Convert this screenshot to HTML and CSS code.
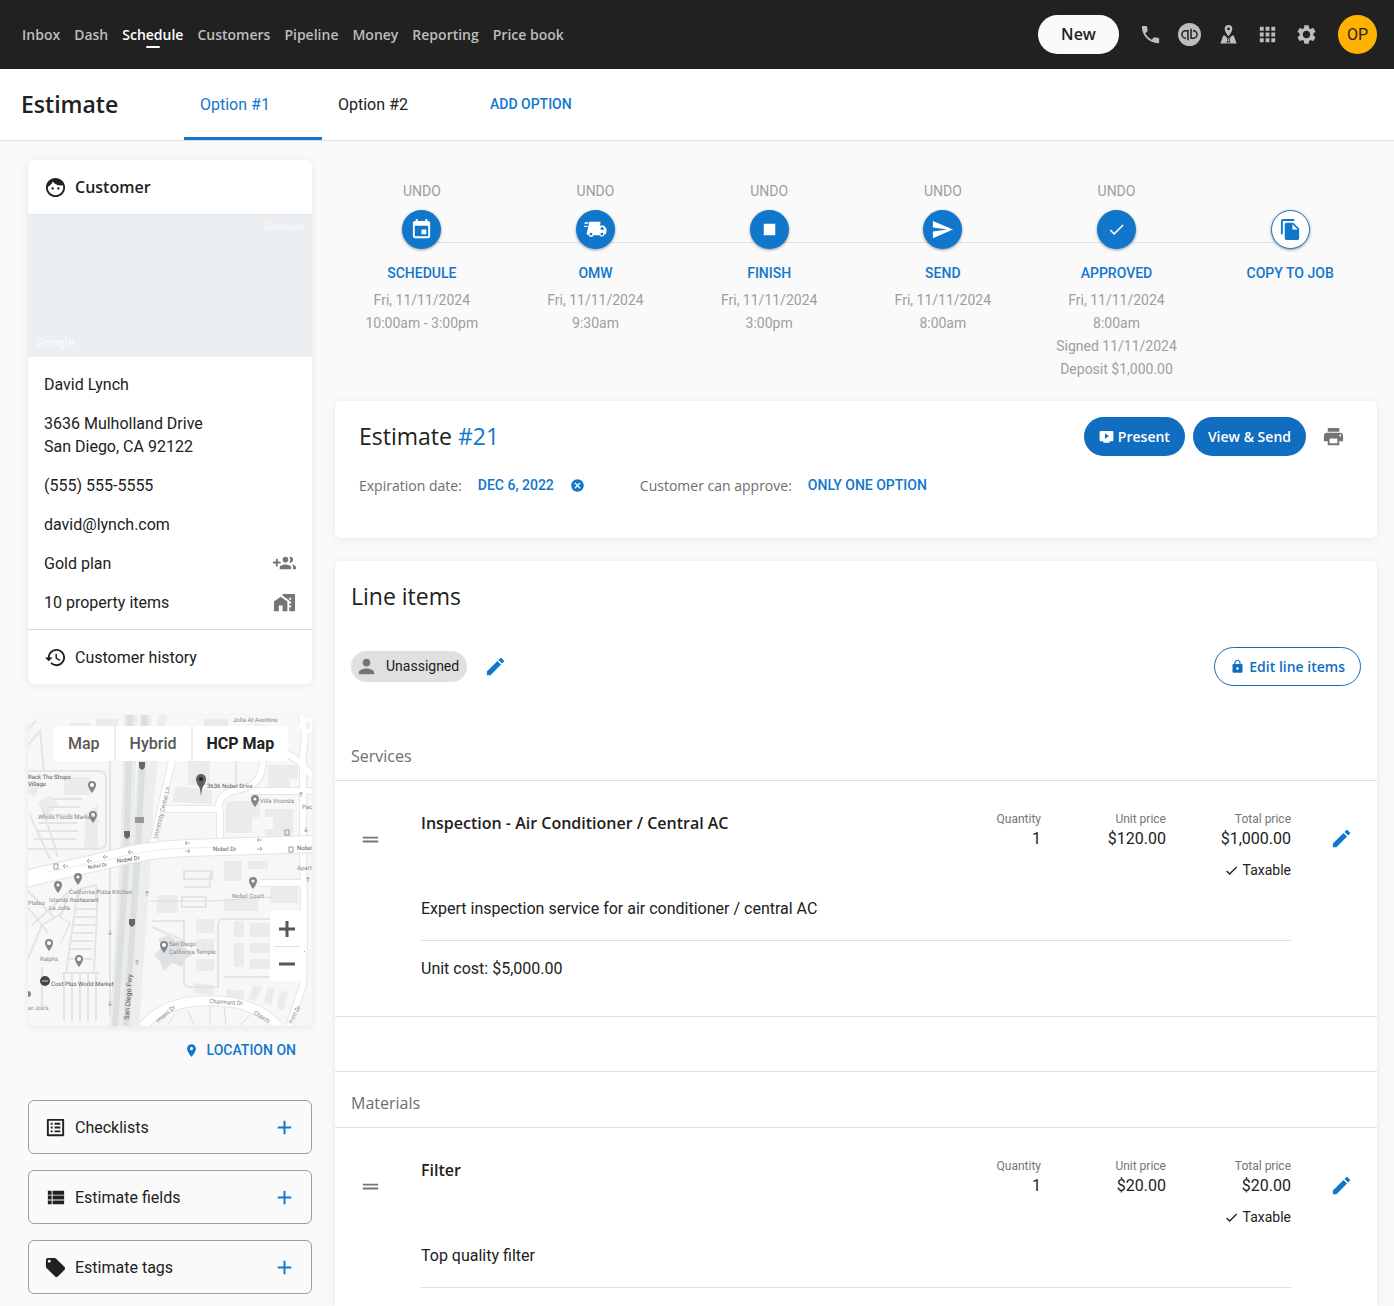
FILE: index.html
```html
<!DOCTYPE html>
<html lang="en">
<head>
    <meta charset="UTF-8">
    <meta name="viewport" content="width=device-width, initial-scale=1.0">
    <title>Estimate #21</title>
    <link rel="stylesheet" href="styles.css">
</head>
<body>
    <svg class="sprite" aria-hidden="true">
        <symbol id="i-phone" viewBox="0 0 24 24"><path d="M6.62 10.79c1.44 2.83 3.76 5.14 6.59 6.59l2.2-2.2c.27-.27.67-.36 1.02-.24 1.12.37 2.33.57 3.57.57.55 0 1 .45 1 1V20c0 .55-.45 1-1 1-9.39 0-17-7.61-17-17 0-.55.45-1 1-1h3.5c.55 0 1 .45 1 1 0 1.25.2 2.45.57 3.57.11.35.03.74-.25 1.02l-2.2 2.2z"/></symbol>
        <symbol id="i-qb" viewBox="0 0 24 24"><circle cx="12" cy="12" r="12"/><g fill="none" stroke="#212121" stroke-width="1.6"><path d="M10.400 18V8H8a3.900 3.900 0 0 0 0 7.800h.4"/><path d="M13.600 6v9.800H16A3.900 3.900 0 0 0 16 8h-.4"/></g></symbol>
        <symbol id="i-tracker" viewBox="0 0 24 24"><path fill-rule="evenodd" d="M12 2a4 4 0 0 0-4 4c0 3 4 8 4 8s4-5 4-8a4 4 0 0 0-4-4zm0 2.600a1.500 1.500 0 1 1 0 3 1.500 1.500 0 0 1 0-3z"/><path d="M8.300 13H6.500L3.500 21.500h6.600L11 16zM15.700 13h1.800l3 8.500h-6.600L13 16zM12 16l-1 3h2zM10.900 20l-.3 1.500h2.800l-.3-1.500z"/></symbol>
        <symbol id="i-apps" viewBox="0 0 24 24"><path d="M4 8h4V4H4v4zm6 12h4v-4h-4v4zm-6 0h4v-4H4v4zm0-6h4v-4H4v4zm6 0h4v-4h-4v4zm6-10v4h4V4h-4zm-6 4h4V4h-4v4zm6 6h4v-4h-4v4zm0 6h4v-4h-4v4z"/></symbol>
        <symbol id="i-settings" viewBox="0 0 24 24"><path d="M19.140 12.940c.04-.3.06-.61.06-.94 0-.32-.02-.64-.07-.94l2.030-1.580c.18-.14.23-.41.12-.61l-1.920-3.320c-.12-.22-.37-.29-.59-.22l-2.390.96c-.5-.38-1.030-.7-1.620-.94l-.36-2.540c-.04-.24-.24-.41-.48-.41h-3.840c-.24 0-.43.17-.47.41l-.36 2.540c-.59.24-1.130.57-1.620.94l-2.390-.96c-.22-.08-.47 0-.59.22L2.740 8.870c-.12.21-.08.47.12.61l2.030 1.580c-.05.3-.09.63-.09.94s.02.64.07.94l-2.030 1.580c-.18.14-.23.41-.12.61l1.920 3.320c.12.22.37.29.59.22l2.390-.96c.5.38 1.030.7 1.620.94l.36 2.540c.05.24.24.41.48.41h3.840c.24 0 .44-.17.47-.41l.36-2.540c.59-.24 1.130-.56 1.620-.94l2.390.96c.22.08.47 0 .59-.22l1.920-3.320c.12-.22.07-.47-.12-.61l-2.010-1.580zM12 15.900c-2.150 0-3.900-1.750-3.900-3.900s1.750-3.900 3.900-3.900 3.900 1.750 3.900 3.900-1.750 3.900-3.900 3.900z"/></symbol>
        <symbol id="i-face" viewBox="0 0 24 24"><path d="M9 11.750c-.69 0-1.250.56-1.250 1.250s.56 1.250 1.250 1.250 1.250-.56 1.250-1.250-.56-1.250-1.250-1.250zm6 0c-.69 0-1.250.56-1.250 1.250s.56 1.250 1.250 1.250 1.250-.56 1.250-1.250-.56-1.250-1.250-1.250zM12 2C6.480 2 2 6.480 2 12s4.480 10 10 10 10-4.480 10-10S17.520 2 12 2zm0 18c-4.410 0-8-3.590-8-8 0-.29.02-.58.05-.86 2.360-1.050 4.230-2.980 5.210-5.370C11.070 8.330 14.050 10 17.420 10c.78 0 1.530-.09 2.250-.26.21.71.33 1.470.33 2.260 0 4.410-3.590 8-8 8z"/></symbol>
        <symbol id="i-group-add" viewBox="0 0 24 24"><path d="M8 10H5V7H3v3H0v2h3v3h2v-3h3v-2zm10 1c1.660 0 2.990-1.340 2.990-3S19.660 5 18 5c-.32 0-.63.05-.91.14.57.81.9 1.790.9 2.860s-.34 2.040-.9 2.860c.28.09.59.14.91.14zm-5 0c1.660 0 2.990-1.340 2.990-3S14.660 5 13 5c-1.660 0-3 1.340-3 3s1.340 3 3 3zm6.620 2.160c.83.73 1.380 1.660 1.380 2.840v2h3v-2c0-1.540-2.370-2.490-4.380-2.840zM13 13c-2 0-6 1-6 3v2h12v-2c0-2-4-3-6-3z"/></symbol>
        <symbol id="i-home-work" viewBox="0 0 24 24"><path d="M1 11v10h5v-6h4v6h5V11L8 6z"/><path d="M10 3v2l7 5v11h6V3H10zm9 14h-2v-2h2v2zm0-4h-2v-2h2v2zm0-4h-2V7h2v2z"/></symbol>
        <symbol id="i-history" viewBox="0 0 24 24"><path d="M13 3c-4.970 0-9 4.030-9 9H1l3.890 3.890.07.14L9 12H6c0-3.870 3.130-7 7-7s7 3.130 7 7-3.130 7-7 7c-1.930 0-3.680-.79-4.940-2.060l-1.420 1.420C8.270 19.990 10.510 21 13 21c4.970 0 9-4.030 9-9s-4.030-9-9-9zm-1 5v5l4.280 2.540.72-1.210-3.500-2.080V8H12z"/></symbol>
        <symbol id="i-list-alt" viewBox="0 0 24 24"><path d="M19 5v14H5V5h14m1.100-2H3.900c-.5 0-.9.4-.9.9v16.200c0 .4.4.9.9.9h16.200c.4 0 .9-.5.9-.9V3.900c0-.5-.5-.9-.9-.9zM11 7h6v2h-6V7zm0 4h6v2h-6v-2zm0 4h6v2h-6zM7 7h2v2H7zm0 4h2v2H7zm0 4h2v2H7z"/></symbol>
        <symbol id="i-view-list" viewBox="0 0 24 24"><path d="M4 14h4v-4H4v4zm0 5h4v-4H4v4zM4 9h4V5H4v4zm5 5h12v-4H9v4zm0 5h12v-4H9v4zM9 5v4h12V5H9z"/></symbol>
        <symbol id="i-tag" viewBox="0 0 24 24"><path d="M21.410 11.580l-9-9C12.050 2.220 11.550 2 11 2H4c-1.100 0-2 .9-2 2v7c0 .55.22 1.050.59 1.420l9 9c.36.36.86.58 1.410.58.55 0 1.050-.22 1.410-.59l7-7c.37-.36.59-.86.59-1.410 0-.55-.23-1.060-.59-1.420zM5.500 7C4.670 7 4 6.330 4 5.500S4.670 4 5.500 4 7 4.670 7 5.500 6.330 7 5.500 7z"/></symbol>
        <symbol id="i-add" viewBox="0 0 24 24"><path d="M19 13h-6v6h-2v-6H5v-2h6V5h2v6h6v2z"/></symbol>
        <symbol id="i-place" viewBox="0 0 24 24"><path d="M12 2C8.130 2 5 5.130 5 9c0 5.250 7 13 7 13s7-7.750 7-13c0-3.870-3.130-7-7-7zm0 9.500c-1.380 0-2.500-1.120-2.500-2.500s1.120-2.500 2.500-2.500 2.500 1.120 2.500 2.500-1.120 2.500-2.500 2.500z"/></symbol>
        <symbol id="i-event" viewBox="0 0 24 24"><path d="M17 12h-5v5h5v-5zM16 1v2H8V1H6v2H5c-1.110 0-1.990.9-1.990 2L3 19c0 1.100.89 2 2 2h14c1.100 0 2-.9 2-2V5c0-1.100-.9-2-2-2h-1V1h-2zm3 18H5V8h14v11z"/></symbol>
        <symbol id="i-truck" viewBox="0 0 24 24"><path fill-rule="evenodd" d="M5.500 4h12l-1 3.800h3.100c.9 0 1.600.3 2.100 1l1.600 2.400c.3.400.4.900.3 1.400l-.7 4.400h-1.500a2.700 2.700 0 0 1-5.100 1H10a2.700 2.700 0 0 1-5.200-.3L2.500 17 3.300 14zM17.800 9.600l-.6 2.600h4l-1.300-2.200c-.2-.3-.4-.4-.7-.4zM7.300 15.300a1.500 1.500 0 1 0 0 3 1.500 1.500 0 0 0 0-3zm11.400 0a1.500 1.500 0 1 0 0 3 1.500 1.500 0 0 0 0-3z"/><path d="M.8 4.500h4l-.4 1.500h-4zM.2 8h3.600l-.5 1.500H0z"/></symbol>
        <symbol id="i-stop" viewBox="0 0 24 24"><path d="M6 6h12v12H6z"/></symbol>
        <symbol id="i-send" viewBox="0 0 24 24"><path d="M2.010 21L23 12 2.010 3 2 10l15 2-15 2z"/></symbol>
        <symbol id="i-check" viewBox="0 0 24 24"><path d="M9 16.170L4.830 12l-1.420 1.410L9 19 21 7l-1.410-1.410z"/></symbol>
        <symbol id="i-copy" viewBox="0 0 24 24"><path d="M16 1H4c-1.100 0-2 .9-2 2v14h2V3h12V1zm-1 4l6 6v10c0 1.100-.9 2-2 2H7.990C6.890 23 6 22.100 6 21l.01-14c0-1.100.89-2 1.990-2h7zm-1 7h5.500L14 6.500V12z"/></symbol>
        <symbol id="i-present" viewBox="0 0 24 24"><path fill-rule="evenodd" d="M3 3h18c1.100 0 2 .9 2 2v12.500c0 1.100-.9 2-2 2h-4V22H7v-2.500H3c-1.100 0-2-.9-2-2V5c0-1.100.9-2 2-2zm6.500 4v8.500l6.500-4.250z"/></symbol>
        <symbol id="i-print" viewBox="0 0 24 24"><path d="M19 8H5c-1.660 0-3 1.340-3 3v6h4v4h12v-4h4v-6c0-1.660-1.340-3-3-3zm-3 11H8v-5h8v5zm3-7c-.55 0-1-.45-1-1s.45-1 1-1 1 .45 1 1-.45 1-1 1zm-1-9H6v4h12V3z"/></symbol>
        <symbol id="i-cancel" viewBox="0 0 24 24"><path d="M12 2C6.470 2 2 6.470 2 12s4.470 10 10 10 10-4.470 10-10S17.530 2 12 2zm5 13.590L15.590 17 12 13.410 8.410 17 7 15.590 10.590 12 7 8.410 8.410 7 12 10.590 15.590 7 17 8.410 13.410 12 17 15.590z"/></symbol>
        <symbol id="i-person" viewBox="0 0 24 24"><path d="M12 12c2.210 0 4-1.790 4-4s-1.790-4-4-4-4 1.790-4 4 1.790 4 4 4zm0 2c-2.670 0-8 1.340-8 4v2h16v-2c0-2.660-5.330-4-8-4z"/></symbol>
        <symbol id="i-edit" viewBox="0 0 24 24"><path d="M3 17.250V21h3.750L17.810 9.940l-3.750-3.750L3 17.250zM20.710 7.040c.39-.39.39-1.020 0-1.410l-2.340-2.340c-.39-.39-1.020-.39-1.410 0l-1.830 1.830 3.750 3.750 1.830-1.830z"/></symbol>
        <symbol id="i-lock" viewBox="0 0 24 24"><path d="M18 8h-1V6c0-2.760-2.240-5-5-5S7 3.240 7 6v2H6c-1.100 0-2 .9-2 2v10c0 1.100.9 2 2 2h12c1.100 0 2-.9 2-2V10c0-1.100-.9-2-2-2zm-6 9c-1.100 0-2-.9-2-2s.9-2 2-2 2 .9 2 2-.9 2-2 2zm3.100-9H8.900V6c0-1.710 1.390-3.100 3.100-3.100 1.710 0 3.100 1.390 3.100 3.100v2z"/></symbol>
        <symbol id="i-drag" viewBox="0 0 24 24"><path d="M20 9H4v2h16V9zM4 15h16v-2H4v2z"/></symbol>
    </svg>

    <header class="topbar">
        <nav class="main-nav">
            <a href="#">Inbox</a>
            <a href="#">Dash</a>
            <a href="#" class="active">Schedule</a>
            <a href="#">Customers</a>
            <a href="#">Pipeline</a>
            <a href="#">Money</a>
            <a href="#">Reporting</a>
            <a href="#">Price book</a>
        </nav>
        <div class="topbar-actions">
            <button type="button" class="btn btn-new">New</button>
            <div class="topbar-icons">
                <button type="button" class="icon-btn" aria-label="Phone"><svg class="icon"><use href="#i-phone"/></svg></button>
                <button type="button" class="icon-btn" aria-label="QuickBooks"><svg class="icon"><use href="#i-qb"/></svg></button>
                <button type="button" class="icon-btn" aria-label="Map"><svg class="icon"><use href="#i-tracker"/></svg></button>
                <button type="button" class="icon-btn" aria-label="Apps"><svg class="icon"><use href="#i-apps"/></svg></button>
                <button type="button" class="icon-btn" aria-label="Settings"><svg class="icon"><use href="#i-settings"/></svg></button>
            </div>
            <button type="button" class="avatar">OP</button>
        </div>
    </header>

    <div class="subbar">
        <h1>Estimate</h1>
        <nav class="tabs">
            <a href="#" class="tab active">Option #1</a>
            <a href="#" class="tab">Option #2</a>
        </nav>
        <button type="button" class="link-btn">ADD OPTION</button>
    </div>

    <main class="page">
        <aside class="sidebar">
            <section class="card">
                <h2 class="card-row card-title"><svg class="icon"><use href="#i-face"/></svg>Customer</h2>
                <div class="street-view">
                    <span class="zestimate">Zestimate</span>
                    <span class="google">Google</span>
                </div>
                <ul class="details">
                    <li>David Lynch</li>
                    <li>3636 Mulholland Drive<br>San Diego, CA 92122</li>
                    <li>(555) 555-5555</li>
                    <li>david@lynch.com</li>
                    <li>Gold plan <svg class="icon"><use href="#i-group-add"/></svg></li>
                    <li>10 property items <svg class="icon"><use href="#i-home-work"/></svg></li>
                </ul>
                <a href="#" class="card-row history"><svg class="icon"><use href="#i-history"/></svg>Customer history</a>
            </section>

            <section class="map">
                <svg class="map-canvas" viewBox="0 0 284 311" preserveAspectRatio="xMidYMid slice">
                    <rect width="284" height="311" fill="#f7f7f7"/>
                    <!-- buildings -->
                    <g fill="#ebebeb">
                        <path d="M42 8h20v12H42zM68 4h22v14H68zM148 71l36 4v14l-40-2zM160 44h22v26h-22zM198 86h34v16h-8v16h-26zM237 94h28v28h-28v-8h8v-12h-8zM240 50h30v14h-8v12h-22zM36 62h26v18H36zM196 146h18v20h-18zM220 146h20v8h-20zM130 180h20v18h-22zM168 204h18v14h-18zM168 224h18v14h-18zM168 244h18v12h-18zM206 206h10v16h-10zM206 228h10v24h-10zM222 208h20v14h-20zM222 228h20v10h-20zM222 244h20v10h-20zM166 268l20 2v10l-20-2zM198 274l18 2v8l-18-1zM226 270l8 2-6 14-8-2zM240 272l7 2-4 16-7-3zM252 276l8 1-4 18-7-2zM196 184h34v12h-34zM242 166h28v22h-28z"/>
                        <path d="M10 88l12-8 8 10-12 12zM2 66l10 6-6 10-6-4zM58 98l12-8v44H56zM226 8l20 4-4 18-16-4zM176 4h24v10h-24z"/>
                    </g>
                    <path d="M126 240l8-8-4-8 10-4 8 6 8-2 2 10 6 6-8 4-2 8-10-4-8 8-4-10z" fill="#dfe2e4"/>
                    <!-- car park lanes -->
                    <g fill="none" stroke="#e2e5e7" stroke-width="2">
                        <path d="M0 56h70q8 0 8 8v62q0 8-8 8H0M24 84h30M20 92h32M14 100h38M10 108h40M8 116h42M6 124h42M2 100l20 44M14 92l16 50M0 30l12-14 4 40M0 14l8-8"/>
                        <path d="M52 174l16-4v16l-18-2zM48 186h22M47 194h22M46 202h22M45 210h22M44 218h22M43 226h22M42 234h22M40 244h24M50 174l-12 84M70 174l-4 84M36 258v48M44 258v48M52 258v48M60 258v48M68 258v48M34 258h38"/>
                        <path d="M0 176l26 26M4 210l40-36M0 244l14-34 20-12 6-18M14 252v40M0 192l20 26"/>
                        <path d="M82 40v260M156 156h28v8h-28zM156 172h26v-14M154 182h24v10h-24zM124 206h32v60q0 6 6 6h28V210q0-6 6-6h50v58h-50M124 212l28 12M142 44h60q6 0 6 6v18"/>
                    </g>
                    <g fill="none" stroke="#dadada">
                        <path d="M122 186h62l60-4M32 230l10-22-10-6 4-10M182 288v22M196 292l2 18M160 296l6 14M146 300l-6 10M222 300l-10 10"/>
                    </g>
                    <!-- San Diego Fwy -->
                    <g fill="none">
                        <path d="M103 0L98 150 88 311" stroke="#e9ebec" stroke-width="13"/>
                        <path d="M102 0L98 150 87 311" stroke="#dcdfe0" stroke-width="6"/>
                        <path d="M118 0L110 130 98 311" stroke="#e9ebec" stroke-width="11"/>
                        <path d="M117 0L110 130 98 311" stroke="#dcdfe0" stroke-width="6"/>
                        <path d="M136 0Q122 40 120 130L107 311" stroke="#ededed" stroke-width="8"/>
                    </g>
                    <!-- streets -->
                    <g fill="none" stroke="#e6e6e6" stroke-width="8">
                        <path d="M146 36L124 134M137 94h54q-2-16 22-20 22-4 22-30M222 76h62M192 94v34M273 0q6 12 2 40v100q2 60 0 130l-14 41M250 36q20 4 34 26M232 168h44"/>
                        <path d="M115 311Q138 286 176 286 226 284 250 311" stroke-width="11"/>
                    </g>
                    <g fill="none" stroke="#fff" stroke-width="6">
                        <path d="M146 36L124 134M137 94h54q-2-16 22-20 22-4 22-30M222 76h62M192 94v34M273 0q6 12 2 40v100q2 60 0 130l-14 41M250 36q20 4 34 26M232 168h44"/>
                        <path d="M115 311Q138 286 176 286 226 284 250 311" stroke-width="9"/>
                    </g>
                    <circle cx="279" cy="10" r="6" fill="none" stroke="#fff" stroke-width="4"/>
                    <path d="M-4 164L79 145Q120 134 160 133L288 129" fill="none" stroke="#e4e4e4" stroke-width="18"/>
                    <path d="M-4 164L79 145Q120 134 160 133L288 129" fill="none" stroke="#fff" stroke-width="16"/>
                    <path d="M20 157L79 145Q120 134 160 133L190 132" fill="none" stroke="#ececec"/>
                    <g fill="none" stroke="#aaa">
                        <path d="M162 128h-5m2-2l-2 2 2 2M157 136h5m-2-2l2 2-2 2M234 125h-5m2-2l-2 2 2 2M229 134h5m-2-2l2 2-2 2M105 137h-5m2-2l-2 2 2 2M80 142h-5m2-2l-2 2 2 2M64 146h-5m2-2l-2 2 2 2M40 151h-5m2-2l-2 2 2 2"/>
                        <path d="M82 215v5m-2-2l2 2 2-2M82 286v5m-2-2l2 2 2-2M119 181v-5m-2 2l2-2 2 2M109 250v-5m-2 2l2-2 2 2M273 82v-5m-2 2l2-2 2 2M278 112v5m-2-2l2 2 2-2M275 233v5m-2-2l2 2 2-2M280 167v-5m-2 2l2-2 2 2"/>
                    </g>
                    <!-- route shields -->
                    <g fill="#666">
                        <path d="M111 47h6v5q-1 2-3 3-2-1-3-3zM96 116h6v5q-1 2-3 3-2-1-3-3zM101 204h6v5q-1 2-3 3-2-1-3-3z"/>
                        <rect x="107" y="102" width="9" height="6" fill="#999"/>
                    </g>
                    <g fill="none" stroke="#999"><rect x="257" y="115" width="4" height="5"/><rect x="261" y="132" width="4" height="5"/><rect x="26" y="149" width="4" height="5"/></g>
                    <!-- pins -->
                    <g class="pins">
                        <path id="pin" d="M64 66a4 4 0 0 0-4 4c0 3 4 8 4 8s4-5 4-8a4 4 0 0 0-4-4z"/>
                        <use href="#pin" x="1" y="30"/>
                        <use href="#pin" x="163" y="14"/>
                        <use href="#pin" x="161" y="96"/>
                        <use href="#pin" x="-34" y="100"/>
                        <use href="#pin" x="-14" y="92"/>
                        <use href="#pin" x="-43" y="158"/>
                        <use href="#pin" x="-13" y="174"/>
                        <use href="#pin" x="72" y="160"/>
                        <g fill="#fff"><circle cx="64" cy="70" r="2"/><circle cx="65" cy="100" r="2"/><circle cx="227" cy="84" r="1.5"/><circle cx="225" cy="166" r="1.500"/><circle cx="30" cy="170" r="1.500"/><circle cx="50" cy="162" r="1.500"/><circle cx="21" cy="228" r="2"/><circle cx="51" cy="244" r="2"/><circle cx="136" cy="230" r="2"/></g>
                        <path d="M173 59a5 5 0 0 0-5 5c0 4 3 7 4 10l1 7 1-7c1-3 4-6 4-10a5 5 0 0 0-5-5z" fill="#616161"/>
                        <circle cx="173" cy="64" r="2" fill="#212121"/>
                        <circle cx="17" cy="266" r="5" fill="#444"/>
                        <path d="M14 266h6" stroke="#ccc"/>
                        <circle cx="0" cy="279" r="3"/>
                    </g>
                    <g class="map-labels">
                        <text x="205" y="7">Jolla At Aventine</text>
                        <text x="0" y="64" class="dark">Rack The Shops</text>
                        <text x="0" y="71" class="dark">Village</text>
                        <text x="10" y="104">Whole Foods Market</text>
                        <text x="179" y="73" class="dark">3636 Nobel Drive</text>
                        <text x="232" y="88">Villa Vicenza</text>
                        <text x="274" y="94">Pac</text>
                        <text x="185" y="136" class="dark">Nobel Dr</text>
                        <text x="269" y="135" class="dark">Nobel</text>
                        <text x="269" y="155">Apart</text>
                        <text transform="translate(89 148) rotate(-8)" class="dark">Nobel Dr</text>
                        <text transform="translate(60 154) rotate(-8)" class="dark tiny">Nobel Dr</text>
                        <text transform="translate(129 124) rotate(-76)">University Center Ln</text>
                        <text x="41" y="179">California Pizza Kitchen</text>
                        <text x="21" y="187">Islands Restaurant</text>
                        <text x="21" y="195">La Jolla</text>
                        <text x="0" y="190">Plates</text>
                        <text x="204" y="183">Nobel Court</text>
                        <text x="141" y="231">San Diego</text>
                        <text x="141" y="239">California Temple</text>
                        <text x="12" y="246">Ralphs</text>
                        <text x="23" y="271" class="dark">Cost Plus World Market</text>
                        <text x="0" y="295">er Joe's</text>
                        <text transform="translate(101 305) rotate(-86)" class="dark road">San Diego Fwy</text>
                        <text transform="translate(181 288) rotate(4)">Charmant Dr</text>
                        <text transform="translate(130 308) rotate(-40)">rmant Dr</text>
                        <text transform="translate(225 299) rotate(30)">Charm</text>
                        <text transform="translate(263 309) rotate(-60)">ount Dr</text>
                    </g>
                </svg>
                <div class="map-types">
                    <button type="button">Map</button>
                    <button type="button">Hybrid</button>
                    <button type="button" class="active">HCP Map</button>
                </div>
                <div class="map-zoom">
                    <button type="button" aria-label="Zoom in"><svg viewBox="0 0 16 16"><path d="M0 8h16M8 0v16"/></svg></button>
                    <button type="button" aria-label="Zoom out"><svg viewBox="0 0 16 16"><path d="M0 8h16"/></svg></button>
                </div>
            </section>

            <button type="button" class="link-btn location"><svg class="icon icon-sm"><use href="#i-place"/></svg>LOCATION ON</button>

            <div class="panels">
                <button type="button" class="panel"><svg class="icon"><use href="#i-list-alt"/></svg><span>Checklists</span><svg class="icon plus"><use href="#i-add"/></svg></button>
                <button type="button" class="panel"><svg class="icon"><use href="#i-view-list"/></svg><span>Estimate fields</span><svg class="icon plus"><use href="#i-add"/></svg></button>
                <button type="button" class="panel"><svg class="icon"><use href="#i-tag"/></svg><span>Estimate tags</span><svg class="icon plus"><use href="#i-add"/></svg></button>
            </div>
        </aside>

        <div class="content">
            <ol class="steps">
                <li class="step">
                    <button type="button" class="undo">UNDO</button>
                    <button type="button" class="step-icon" aria-label="Schedule"><svg class="icon"><use href="#i-event"/></svg></button>
                    <strong>SCHEDULE</strong>
                    <p>Fri, 11/11/2024<br>10:00am - 3:00pm</p>
                </li>
                <li class="step">
                    <button type="button" class="undo">UNDO</button>
                    <button type="button" class="step-icon" aria-label="On my way"><svg class="icon"><use href="#i-truck"/></svg></button>
                    <strong>OMW</strong>
                    <p>Fri, 11/11/2024<br>9:30am</p>
                </li>
                <li class="step">
                    <button type="button" class="undo">UNDO</button>
                    <button type="button" class="step-icon" aria-label="Finish"><svg class="icon"><use href="#i-stop"/></svg></button>
                    <strong>FINISH</strong>
                    <p>Fri, 11/11/2024<br>3:00pm</p>
                </li>
                <li class="step">
                    <button type="button" class="undo">UNDO</button>
                    <button type="button" class="step-icon" aria-label="Send"><svg class="icon"><use href="#i-send"/></svg></button>
                    <strong>SEND</strong>
                    <p>Fri, 11/11/2024<br>8:00am</p>
                </li>
                <li class="step">
                    <button type="button" class="undo">UNDO</button>
                    <button type="button" class="step-icon" aria-label="Approved"><svg class="icon icon-md"><use href="#i-check"/></svg></button>
                    <strong>APPROVED</strong>
                    <p>Fri, 11/11/2024<br>8:00am<br>Signed 11/11/2024<br>Deposit $1,000.00</p>
                </li>
                <li class="step">
                    <span class="undo"></span>
                    <button type="button" class="step-icon outlined" aria-label="Copy to job"><svg class="icon"><use href="#i-copy"/></svg></button>
                    <strong>COPY TO JOB</strong>
                </li>
            </ol>

            <section class="card summary">
                <div class="summary-head">
                    <h2>Estimate <a href="#">#21</a></h2>
                    <button type="button" class="btn btn-primary"><svg class="icon icon-sm"><use href="#i-present"/></svg>Present</button>
                    <button type="button" class="btn btn-primary">View &amp; Send</button>
                    <button type="button" class="icon-btn print" aria-label="Print"><svg class="icon"><use href="#i-print"/></svg></button>
                </div>
                <div class="summary-meta">
                    <span>Expiration date:</span>
                    <button type="button" class="link-btn">DEC 6, 2022</button>
                    <button type="button" class="link-btn clear" aria-label="Clear date"><svg class="icon icon-sm"><use href="#i-cancel"/></svg></button>
                    <span>Customer can approve:</span>
                    <button type="button" class="link-btn">ONLY ONE OPTION</button>
                </div>
            </section>

            <section class="card line-items">
                <h2>Line items</h2>
                <div class="assign">
                    <span class="chip"><svg class="icon"><use href="#i-person"/></svg>Unassigned</span>
                    <button type="button" class="icon-btn edit" aria-label="Edit assignee"><svg class="icon"><use href="#i-edit"/></svg></button>
                    <button type="button" class="btn btn-outline"><svg class="icon icon-sm"><use href="#i-lock"/></svg>Edit line items</button>
                </div>

                <h3>Services</h3>
                <article class="item">
                    <svg class="icon drag"><use href="#i-drag"/></svg>
                    <div class="item-body">
                        <div class="item-head">
                            <h4>Inspection - Air Conditioner / Central AC</h4>
                            <dl>
                                <div><dt>Quantity</dt><dd>1</dd></div>
                                <div><dt>Unit price</dt><dd>$120.00</dd></div>
                                <div><dt>Total price</dt><dd>$1,000.00</dd></div>
                            </dl>
                        </div>
                        <p class="taxable"><svg class="icon icon-sm"><use href="#i-check"/></svg>Taxable</p>
                        <p class="description">Expert inspection service for air conditioner / central AC</p>
                        <p class="cost">Unit cost: $5,000.00</p>
                    </div>
                    <button type="button" class="icon-btn edit" aria-label="Edit inspection"><svg class="icon"><use href="#i-edit"/></svg></button>
                </article>

                <div class="spacer"></div>

                <h3>Materials</h3>
                <article class="item last">
                    <svg class="icon drag"><use href="#i-drag"/></svg>
                    <div class="item-body">
                        <div class="item-head">
                            <h4>Filter</h4>
                            <dl>
                                <div><dt>Quantity</dt><dd>1</dd></div>
                                <div><dt>Unit price</dt><dd>$20.00</dd></div>
                                <div><dt>Total price</dt><dd>$20.00</dd></div>
                            </dl>
                        </div>
                        <p class="taxable"><svg class="icon icon-sm"><use href="#i-check"/></svg>Taxable</p>
                        <p class="description">Top quality filter</p>
                    </div>
                    <button type="button" class="icon-btn edit" aria-label="Edit filter"><svg class="icon"><use href="#i-edit"/></svg></button>
                </article>
            </section>
        </div>
    </main>
</body>
</html>
```
FILE: styles.css
```css
* { box-sizing: border-box; margin: 0; padding: 0; }

body {
    display: flex;
    flex-direction: column;
    min-height: 100vh;
    background: #fafafa;
    color: #212121;
    font: 16px/23px Roboto, sans-serif;
}

h1, h2, h3, h4, .main-nav, .btn, .summary-meta span { font-family: "Open Sans", sans-serif; }
a { color: inherit; text-decoration: none; }
ul, ol { list-style: none; }
button { background: none; border: 0; color: inherit; font: inherit; cursor: pointer; }

.sprite { display: none; }
.icon { width: 23px; height: 23px; fill: currentColor; flex: none; }
.icon-md { width: 19px; height: 19px; }
.icon-sm { width: 15px; height: 15px; }

.icon-btn {
    display: flex;
    align-items: center;
    justify-content: center;
    width: 39px;
    height: 39px;
}

.btn {
    display: inline-flex;
    align-items: center;
    justify-content: center;
    gap: 4px;
    height: 39px;
    padding: 0 15px;
    border-radius: 20px;
    font-size: 14px;
    font-weight: 600;
}
.btn-primary { background: #116dbf; color: #fff; }
.btn-outline { border: 1px solid #116dbf; color: #116dbf; }
.btn-new { width: 81px; background: #fafafa; color: #212121; font-size: 16px; }

.link-btn { color: #1177cc; font-size: 14px; font-weight: 500; }

/* top bar */
.topbar {
    display: flex;
    align-items: center;
    justify-content: space-between;
    height: 69px;
    padding: 0 17px 0 22px;
    background: #212121;
    color: #bdbdbd;
}
.main-nav { display: flex; gap: 14px; font-size: 14px; font-weight: 600; }
.main-nav .active { position: relative; color: #fff; }
.main-nav .active::after {
    content: "";
    position: absolute;
    left: 50%;
    bottom: -2px;
    width: 14px;
    height: 2px;
    margin-left: -7px;
    border-radius: 1px;
    background: #fff;
}
.topbar-actions { display: flex; align-items: center; gap: 12px; }
.topbar-icons { display: flex; }
.avatar {
    width: 39px;
    height: 39px;
    border-radius: 50%;
    background: #ffb300;
    color: #212121;
}

/* estimate options */
.subbar {
    display: flex;
    align-items: center;
    height: 72px;
    padding-left: 21px;
    background: #fff;
    border-bottom: 1px solid #e0e0e0;
}
.subbar h1 { width: 163px; font-size: 23px; font-weight: 600; }
.tabs { display: flex; align-self: stretch; margin-right: 30px; }
.tab {
    display: flex;
    align-items: center;
    width: 138px;
    padding: 3px 16px 0;
    border-bottom: 3px solid transparent;
}
.tab.active { color: #1177cc; border-color: #1177cc; }

.page {
    flex: 1;
    display: grid;
    grid-template-columns: 284px 1fr;
    gap: 23px;
    padding: 19px 17px 0 28px;
}

.card {
    background: #fff;
    border-radius: 6px;
    box-shadow: 0 1px 10px rgba(0, 0, 0, 0.08);
}

/* sidebar */
.card-row { display: flex; align-items: center; gap: 8px; height: 54px; padding: 0 16px; }
.card-title { font-size: 16px; font-weight: 600; }
.street-view {
    display: flex;
    flex-direction: column;
    justify-content: space-between;
    height: 143px;
    padding: 1px 8px 2px;
    background: #ebeff2;
    border-top: 1px solid #e4e7e9;
    color: #fafafa;
}
.zestimate { align-self: flex-end; font-size: 9px; }
.google { font-size: 12px; font-weight: 500; }
.details {
    display: flex;
    flex-direction: column;
    gap: 16px;
    padding: 16px 16px 15px;
}
.details li { display: flex; justify-content: space-between; }
.details .icon { color: #757575; }
.history { border-top: 1px solid #d9d9d9; height: 55px; }

.map {
    position: relative;
    margin-top: 31px;
    border-radius: 6px;
    box-shadow: 0 2px 8px rgba(0, 0, 0, 0.08);
    overflow: hidden;
}
.map-canvas { display: block; width: 100%; }
.map-labels { fill: #858585; font-size: 6px; text-rendering: geometricPrecision; }
.map-labels .dark { fill: #555; }
.map-labels .tiny { font-size: 5px; }
.map-labels .road { font-size: 7px; }
.pins { fill: #858585; }
.map-types {
    position: absolute;
    top: 11px;
    left: 26px;
    display: flex;
    gap: 2px;
    border-radius: 3px;
    overflow: hidden;
    background: #eee;
}
.map-types button { padding: 6px 14px; background: #fff; color: #565656; font-weight: 500; }
.map-types .active { color: #212121; font-weight: 700; }
.map-zoom {
    position: absolute;
    right: 8px;
    bottom: 45px;
    padding: 0 4px;
    border-radius: 3px;
    background: #fff;
}
.map-zoom button { display: grid; place-items: center; width: 26px; height: 35px; }
.map-zoom button + button { border-top: 1px solid #e0e0e0; }
.map-zoom svg { width: 16px; height: 16px; stroke: #565656; stroke-width: 3; }

.location { display: flex; align-items: center; gap: 8px; margin: 13px 16px 0 auto; }

.panels { display: flex; flex-direction: column; gap: 16px; margin-top: 38px; }
.panel {
    display: flex;
    align-items: center;
    gap: 8px;
    height: 54px;
    padding: 0 15px;
    border: 1px solid #9e9e9e;
    border-radius: 6px;
    text-align: left;
}
.panel span { flex: 1; }
.panel .plus { color: #1177cc; }

/* progress */
.content { display: flex; flex-direction: column; }
.steps {
    position: relative;
    display: grid;
    grid-template-columns: repeat(6, 1fr);
    margin: 20px 0;
    color: #9e9e9e;
    font-size: 14px;
    text-align: center;
}
.steps::before {
    content: "";
    position: absolute;
    top: 62px;
    left: 8%;
    right: 8%;
    border-top: 1px solid #e0e0e0;
}
.step { position: relative; }
.undo { display: block; height: 23px; margin: 0 auto; }
.step-icon {
    display: flex;
    align-items: center;
    justify-content: center;
    width: 39px;
    height: 39px;
    margin: 7px auto 13px;
    border-radius: 50%;
    background: #1177cc;
    color: #fff;
    box-shadow: 0 1px 3px rgba(0, 0, 0, 0.4);
}
.step-icon.outlined { background: #fff; border: 1px solid #1177cc; color: #1177cc; }
.step strong { display: block; margin-bottom: 4px; color: #1177cc; font-weight: 500; }

/* estimate summary */
.summary { padding: 16px 24px 41px; }
.summary-head { display: flex; align-items: center; gap: 8px; }
.summary-head h2 { flex: 1; }
.summary-head a { color: #1177cc; }
.summary h2, .line-items h2 { font-size: 23px; font-weight: 400; }
.print { color: #757575; }
.summary-meta { display: flex; align-items: center; gap: 16px; margin-top: 18px; }
.summary-meta span { color: #6e6e6e; font-size: 14px; font-weight: 500; }
.clear { display: flex; margin-right: 39px; }

/* line items */
.line-items { flex: 1; margin-top: 23px; padding-top: 24px; border-radius: 6px 6px 0 0; }
.line-items h2 { padding: 0 16px; }
.assign { display: flex; align-items: center; gap: 9px; margin: 39px 16px 59px; }
.chip {
    display: flex;
    align-items: center;
    gap: 8px;
    height: 31px;
    padding: 0 8px 0 4px;
    border-radius: 16px;
    background: #e0e0e0;
    font-size: 14px;
}
.chip .icon { color: #757575; }
.edit { color: #1177cc; }
.assign .btn-outline { margin-left: auto; }
.line-items h3 {
    padding: 0 16px 12px;
    border-bottom: 1px solid #e0e0e0;
    color: #6e6e6e;
    font-size: 16px;
    font-weight: 500;
}

.item {
    display: grid;
    grid-template-columns: 70px 1fr 70px;
    padding: 31px 16px 36px;
    border-bottom: 1px solid #e0e0e0;
}
.item.last { border-bottom: 0; padding-bottom: 0; }
.item > .drag { margin: 16px 8px; color: #757575; }
.item > .edit { margin: 7px 0 0 auto; }
.item-head { display: flex; justify-content: space-between; }
.item-head h4 { font-size: 16px; font-weight: 600; }
.item-head dl { display: flex; text-align: right; }
.item-head dl div { width: 125px; }
.item-head dt { color: #757575; font-size: 12px; line-height: 15px; }
.taxable {
    display: flex;
    align-items: center;
    justify-content: flex-end;
    gap: 4px;
    margin-top: 9px;
    font-size: 14px;
}
.description { padding: 15px 0 20px; border-bottom: 1px solid #e0e0e0; }
.cost { padding-top: 16px; }
.spacer { height: 55px; border-bottom: 1px solid #e0e0e0; margin-bottom: 20px; }
```
